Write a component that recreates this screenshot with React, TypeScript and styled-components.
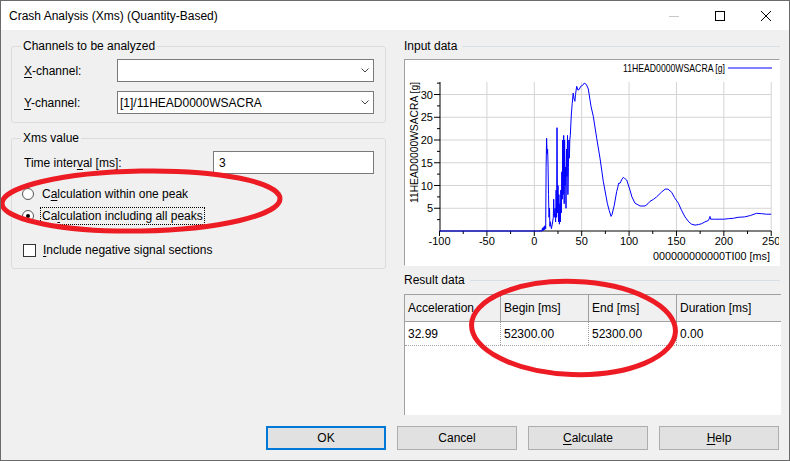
import React from 'react';
import styled, { createGlobalStyle } from 'styled-components';

const GlobalStyle = createGlobalStyle`
  html, body { margin: 0; padding: 0; background: #f0f0f0; }
  body {
    font-family: "Segoe UI", "Liberation Sans", Arial, sans-serif;
    font-size: 12px;
    color: #000;
  }
  #root { width: 790px; height: 461px; }
`;

const Window = styled.div`
  position: relative;
  width: 790px;
  height: 461px;
  box-sizing: border-box;
  border: 1px solid #6a6a6a;
  background: #f0f0f0;
  display: flex;
  flex-direction: column;
  overflow: hidden;
`;

const TitleBar = styled.div`
  height: 29px;
  flex: none;
  background: #fff;
  display: flex;
  align-items: center;
`;

const TitleText = styled.div`
  flex: 1;
  padding-left: 8px;
  line-height: 16px;
`;

const CaptionButton = styled.div`
  width: 46px;
  height: 29px;
  display: flex;
  align-items: center;
  justify-content: center;
`;

const Main = styled.div`
  display: flex;
  gap: 18px;
  padding: 8px 9px 0 10px;
`;

const LeftCol = styled.div`
  width: 375px;
  flex: none;
  display: flex;
  flex-direction: column;
`;

const RightCol = styled.div`
  width: 376px;
  flex: none;
  display: flex;
  flex-direction: column;
`;

const GroupBox = styled.div<{ $mt: number }>`
  margin-top: ${(p) => p.$mt}px;
  border: 1px solid #dcdcdc;
  border-radius: 3px;
  padding: 0 11px ${(p) => (p.$mt > 10 ? 9 : 8)}px 12px;
  display: flex;
  flex-direction: column;
`;

const GroupTitle = styled.div`
  align-self: flex-start;
  margin: -9px 0 0 -3px;
  padding: 0 2px;
  line-height: 16px;
  background: #f0f0f0;
`;

const FieldRow = styled.div<{ $mt: number }>`
  margin-top: ${(p) => p.$mt}px;
  display: flex;
  align-items: center;
  height: 23px;
`;

const FieldLabel = styled.div<{ $w: number }>`
  width: ${(p) => p.$w}px;
  flex: none;
  line-height: 16px;
`;

const Combo = styled.div`
  flex: 1;
  height: 23px;
  box-sizing: border-box;
  border: 1px solid #7a7a7a;
  background: #fff;
  display: flex;
  align-items: center;
  padding: 0 4px 0 2px;
  line-height: 16px;
`;

const ComboText = styled.div`
  flex: 1;
`;

const TextInput = styled.div`
  flex: 1;
  height: 23px;
  box-sizing: border-box;
  border: 1px solid #7a7a7a;
  background: #fff;
  display: flex;
  align-items: center;
  padding-left: 5px;
  line-height: 16px;
`;

const OptionRow = styled.div<{ $mt: number }>`
  margin-top: ${(p) => p.$mt}px;
  height: 18px;
  display: flex;
  align-items: center;
`;

const Radio = styled.div<{ $checked?: boolean }>`
  width: 12px;
  height: 12px;
  box-sizing: border-box;
  margin-left: -2px;
  border: 1px solid #555;
  border-radius: 50%;
  background: #fff;
  display: flex;
  align-items: center;
  justify-content: center;
  &::after {
    content: '';
    display: ${(p) => (p.$checked ? 'block' : 'none')};
    width: 4px;
    height: 4px;
    border-radius: 50%;
    background: #000;
  }
`;

const Check = styled.div`
  width: 13px;
  height: 13px;
  box-sizing: border-box;
  margin-left: -1px;
  border: 1px solid #333;
  background: #fff;
`;

const OptionLabel = styled.div<{ $focus?: boolean; $ml: number }>`
  margin-left: ${(p) => p.$ml}px;
  padding: 0 1px;
  line-height: 16px;
  border: 1px ${(p) => (p.$focus ? 'dotted #000' : 'solid transparent')};
`;

const Mn = styled.span`
  text-decoration: underline;
  text-underline-offset: 2px;
`;

const SectionHeader = styled.div<{ $mt: number }>`
  margin-top: ${(p) => p.$mt}px;
  display: flex;
  align-items: center;
  height: 16px;
  line-height: 16px;
  &::after {
    content: '';
    flex: 1;
    height: 1px;
    margin-left: 5px;
    background: #d5dfe5;
  }
`;

const ChartBox = styled.div`
  margin-top: 5px;
  height: 207px;
  box-sizing: border-box;
  border: 1px solid;
  border-color: #a0a0a0 #ffffff #ffffff #a0a0a0;
  background: #fff;
  display: flex;
`;

const Grid = styled.div`
  margin-top: 6px;
  height: 121px;
  width: 377px;
  box-sizing: border-box;
  border-left: 1px solid #a0a0a0;
  border-top: 1px solid #a0a0a0;
  background: #fff;
  display: flex;
  flex-direction: column;
  overflow: hidden;
`;

const GridRow = styled.div<{ $head?: boolean }>`
  display: flex;
  height: ${(p) => (p.$head ? 27 : 24)}px;
  box-sizing: border-box;
  background: ${(p) => (p.$head ? '#f0f0f0' : '#fff')};
  border-bottom: 1px ${(p) => (p.$head ? 'solid #a0a0a0' : 'dotted #a0a0a0')};
`;

const GridCell = styled.div<{ $w?: number; $head?: boolean }>`
  ${(p) => (p.$w ? `width: ${p.$w}px; flex: none;` : 'flex: 1;')}
  box-sizing: border-box;
  padding-left: 3px;
  display: flex;
  align-items: center;
  line-height: 16px;
  border-right: 1px ${(p) => (p.$head ? 'solid #a0a0a0' : 'dotted #a0a0a0')};
`;

const ButtonRow = styled.div`
  margin-top: 11px;
  display: flex;
  justify-content: flex-end;
  gap: 11px;
  padding-right: 10px;
`;

const Button = styled.div<{ $default?: boolean }>`
  width: 120px;
  height: 24px;
  box-sizing: border-box;
  border: ${(p) => (p.$default ? '2px solid #0078d7' : '1px solid #adadad')};
  background: #e1e1e1;
  display: flex;
  align-items: center;
  justify-content: center;
  line-height: 16px;
`;

const Annotations = styled.svg`
  position: absolute;
  top: -1px;
  left: -1px;
  pointer-events: none;
`;

const X = (t: number) => 534.3 + t * 0.9477;
const Y = (v: number) => 231 - v * 4.55;

const data: [number, number][] = [
  [-100, 0], [8, 0], [8.5, 0.6], [9, 0], [9.5, 0.8], [10, 0.2], [10.5, 1], [11, 0.3], [11.5, 1.2], [12, 0.5],
  [12.5, 14], [13, 20.4], [13.5, 17], [14, 18], [14.5, 15], [15, 8], [15.5, 3], [16, 5], [16.5, 1], [17, 2],
  [18, 0.5], [19, 1.5], [20, 3], [20.5, 7], [21, 3], [22, 5], [22.5, 2], [23, 9], [23.5, 3], [24, 22.7],
  [24.5, 4], [25, 10], [25.5, 2], [26, 8], [26.5, 1.5], [27, 6], [27.5, 2], [28, 9], [28.5, 4], [29, 13],
  [29.5, 7], [30, 20], [30.5, 8], [31, 21], [31.5, 6], [32, 20], [32.5, 10], [33, 14], [33.5, 5], [34, 18],
  [34.5, 12], [35, 21], [35.5, 8], [36, 14], [36.5, 20], [37, 16], [37.5, 20], [38, 21], [39, 25.5], [40, 28],
  [41, 30.3], [42, 29], [42.8, 28.5], [43.5, 30], [44.7, 31.8], [46, 31], [47.4, 31.1], [49, 31.8], [51, 32],
  [52.8, 32.5], [55, 32.2], [57, 31.2], [59.8, 27.4], [62.3, 25.2], [65.8, 20.4], [69.3, 16], [72.8, 10.9],
  [77, 6.1], [79, 4.5], [81, 3.2], [82, 3.6], [84.4, 5.7], [87, 8.7], [88, 9.5], [89, 10.5], [90.5, 10.5],
  [92, 11.2], [93.9, 11.8], [95, 11.6], [97.5, 11.2], [101, 9], [103, 7.5], [106.3, 6.1], [111.6, 5.5],
  [116.8, 5.5], [120, 6], [122, 6.5], [126, 7], [129, 7.5], [134, 8.5], [138, 9.2], [141, 9.2], [145, 8.5],
  [148, 7.3], [152, 6.1], [155, 4.7], [159, 3.1], [163, 2], [166, 1.5], [169.6, 1.3], [173, 1.4],
  [176.6, 1.6], [180, 2], [183.7, 2.3], [185, 2.9], [185.4, 3.2], [186, 2.6], [190, 2.6], [200, 2.6],
  [204.7, 2.7], [210, 2.8], [215, 3], [222, 3.1], [228, 3.4], [234.6, 3.9], [240, 3.8], [245, 3.7], [250, 3.7],
];

const xMajor = [-100, -50, 0, 50, 100, 150, 200, 250];
const xMinor = [-75, -25, 25, 75, 125, 175, 225];
const yMajor = [5, 10, 15, 20, 25, 30];
const yMinor = [2.5, 7.5, 12.5, 17.5, 22.5, 27.5, 32.5];

function Chart() {
  const pts = data.map(([t, v]) => `${X(t).toFixed(1)},${Y(v).toFixed(1)}`).join(' ');
  const top = 82;
  const right = X(250);
  return (
    <svg width={374} height={205} viewBox="405 60 374 205" fontFamily='"Liberation Sans", Arial, sans-serif'>
      {xMajor.slice(1).map((t) => (
        <line key={`gx${t}`} x1={X(t)} x2={X(t)} y1={top} y2={231} stroke="#d4d4d4" strokeWidth={1} />
      ))}
      {yMajor.map((v) => (
        <line key={`gy${v}`} x1={440} x2={right} y1={Y(v)} y2={Y(v)} stroke="#d4d4d4" strokeWidth={1} />
      ))}
      <line x1={440} x2={440} y1={top} y2={231.5} stroke="#000" />
      <line x1={440} x2={right} y1={231} y2={231} stroke="#000" />
      {xMajor.map((t) => (
        <line key={`tx${t}`} x1={X(t)} x2={X(t)} y1={231} y2={236} stroke="#000" />
      ))}
      {xMinor.map((t) => (
        <line key={`mx${t}`} x1={X(t)} x2={X(t)} y1={231} y2={234} stroke="#000" />
      ))}
      {yMajor.map((v) => (
        <line key={`ty${v}`} x1={434} x2={440} y1={Y(v)} y2={Y(v)} stroke="#000" />
      ))}
      {yMinor.map((v) => (
        <line key={`my${v}`} x1={437} x2={440} y1={Y(v)} y2={Y(v)} stroke="#000" />
      ))}
      {xMajor.map((t) => (
        <text key={`lx${t}`} x={X(t)} y={245} fontSize={11} textAnchor="middle" fill="#000">
          {t}
        </text>
      ))}
      {yMajor.map((v) => (
        <text key={`ly${v}`} x={433} y={Y(v) + 4} fontSize={11} textAnchor="end" fill="#000">
          {v}
        </text>
      ))}
      <polyline points={pts} fill="none" stroke="#0000ff" strokeWidth={1} />
      <text x={653} y={260} fontSize={11.5} textLength={117} lengthAdjust="spacingAndGlyphs" fill="#000">
        000000000000TI00 [ms]
      </text>
      <text
        transform="translate(418, 142.5) rotate(-90)"
        fontSize={11.5}
        textAnchor="middle"
        textLength={121}
        lengthAdjust="spacingAndGlyphs"
        fill="#000"
      >
        11HEAD0000WSACRA [g]
      </text>
      <text x={623} y={72} fontSize={10.5} textLength={102} lengthAdjust="spacingAndGlyphs" fill="#000">
        11HEAD0000WSACRA [g]
      </text>
      <line x1={728} x2={772} y1={68} y2={68} stroke="#0000ff" />
    </svg>
  );
}

export default function App() {
  return (
    <>
      <GlobalStyle />
      <Window>
        <TitleBar>
          <TitleText>Crash Analysis (Xms) (Quantity-Based)</TitleText>
          <CaptionButton>
            <svg width="10" height="10" viewBox="0 0 10 10">
              <line x1="0" y1="5.5" x2="10" y2="5.5" stroke="#c8c8c8" />
            </svg>
          </CaptionButton>
          <CaptionButton>
            <svg width="10" height="10" viewBox="0 0 10 10">
              <rect x="0.5" y="0.5" width="9" height="9" fill="none" stroke="#000" />
            </svg>
          </CaptionButton>
          <CaptionButton>
            <svg width="10" height="10" viewBox="0 0 10 10">
              <path d="M0 0 L10 10 M10 0 L0 10" stroke="#000" strokeWidth="1" />
            </svg>
          </CaptionButton>
        </TitleBar>

        <Main>
          <LeftCol>
            <GroupBox $mt={8}>
              <GroupTitle>Channels to be analyzed</GroupTitle>
              <FieldRow $mt={5}>
                <FieldLabel $w={93}>
                  <Mn>X</Mn>-channel:
                </FieldLabel>
                <Combo>
                  <ComboText />
                  <svg width="8" height="5" viewBox="0 0 8 5">
                    <path d="M0.5 0.5 L4 4 L7.5 0.5" fill="none" stroke="#444" />
                  </svg>
                </Combo>
              </FieldRow>
              <FieldRow $mt={9}>
                <FieldLabel $w={93}>
                  <Mn>Y</Mn>-channel:
                </FieldLabel>
                <Combo>
                  <ComboText>[1]/11HEAD0000WSACRA</ComboText>
                  <svg width="8" height="5" viewBox="0 0 8 5">
                    <path d="M0.5 0.5 L4 4 L7.5 0.5" fill="none" stroke="#444" />
                  </svg>
                </Combo>
              </FieldRow>
            </GroupBox>

            <GroupBox $mt={15}>
              <GroupTitle>Xms value</GroupTitle>
              <FieldRow $mt={5}>
                <FieldLabel $w={189}>
                  Time inter<Mn>v</Mn>al [ms]:
                </FieldLabel>
                <TextInput>3</TextInput>
              </FieldRow>
              <OptionRow $mt={11}>
                <Radio />
                <OptionLabel $ml={6}>
                  C<Mn>a</Mn>lculation within one peak
                </OptionLabel>
              </OptionRow>
              <OptionRow $mt={4}>
                <Radio $checked />
                <OptionLabel $ml={6} $focus>
                  Ca<Mn>l</Mn>culation including all peaks
                </OptionLabel>
              </OptionRow>
              <OptionRow $mt={16}>
                <Check />
                <OptionLabel $ml={5}>
                  <Mn>I</Mn>nclude negative signal sections
                </OptionLabel>
              </OptionRow>
            </GroupBox>
          </LeftCol>

          <RightCol>
            <SectionHeader $mt={0}>Input data</SectionHeader>
            <ChartBox>
              <Chart />
            </ChartBox>
            <SectionHeader $mt={6}>Result data</SectionHeader>
            <Grid>
              <GridRow $head>
                <GridCell $w={96} $head>Acceleration</GridCell>
                <GridCell $w={88} $head>Begin [ms]</GridCell>
                <GridCell $w={88} $head>End [ms]</GridCell>
                <GridCell $w={120} $head>Duration [ms]</GridCell>
              </GridRow>
              <GridRow>
                <GridCell $w={96}>32.99</GridCell>
                <GridCell $w={88}>52300.00</GridCell>
                <GridCell $w={88}>52300.00</GridCell>
                <GridCell $w={120}>0.00</GridCell>
              </GridRow>
            </Grid>
          </RightCol>
        </Main>

        <ButtonRow>
          <Button $default>OK</Button>
          <Button>Cancel</Button>
          <Button>
            <span>
              <Mn>C</Mn>alculate
            </span>
          </Button>
          <Button>
            <span>
              <Mn>H</Mn>elp
            </span>
          </Button>
        </ButtonRow>

        <Annotations width={790} height={461} viewBox="0 0 790 461">
          <ellipse
            cx={141}
            cy={201}
            rx={139}
            ry={30}
            transform="rotate(-1 141 201)"
            fill="none"
            stroke="#ed1c24"
            strokeWidth={5}
          />
          <ellipse
            cx={573.5}
            cy={328}
            rx={102}
            ry={46.5}
            transform="rotate(2 573.5 328)"
            fill="none"
            stroke="#ed1c24"
            strokeWidth={5}
          />
        </Annotations>
      </Window>
    </>
  );
}
